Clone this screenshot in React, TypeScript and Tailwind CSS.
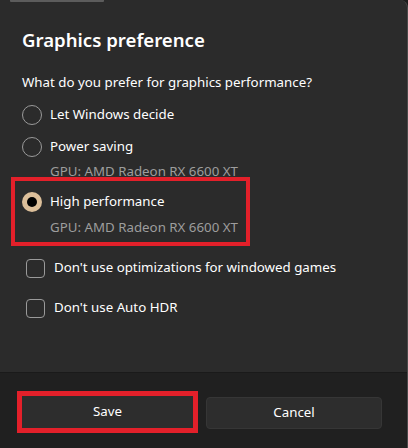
const options = [
  { label: "Let Windows decide", gpu: "" },
  { label: "Power saving", gpu: "GPU: AMD Radeon RX 6600 XT" },
];

function Radio({ checked }: { checked?: boolean }) {
  if (checked) {
    return (
      <span className="flex h-5 w-5 shrink-0 items-center justify-center rounded-full bg-[#dcbf9a]">
        <span className="h-[10px] w-[10px] rounded-full bg-black" />
      </span>
    );
  }
  return <span className="h-5 w-5 shrink-0 rounded-full border border-[#9a9a9a]" />;
}

function Check({ label }: { label: string }) {
  return (
    <div className="flex h-5 items-center gap-[9px] pl-[4px]">
      <span className="h-[19px] w-[19px] shrink-0 rounded-[4px] border border-[#9a9a9a]" />
      <span className="whitespace-nowrap">{label}</span>
    </div>
  );
}

export default function App() {
  return (
    <div
      className="h-[448px] w-[408px] overflow-hidden bg-[#1c1c1c] text-[13.3px] text-white"
      style={{ fontFamily: "'Noto Sans', sans-serif" }}
    >
      <div className="flex h-full flex-col rounded-tr-[8px] border-r border-[#4a4a4a] bg-[#2b2b2b]">
        <div className="ml-[10px] h-[2px] w-[94px] rounded-b-[1px] bg-[#5c5c5c]" />
        <div className="flex-1 px-[22px]">
          <h1 className="mt-[25px] text-[18.6px] font-semibold leading-[26px]">Graphics preference</h1>
          <p className="mt-[19px] leading-[20px]">What do you prefer for graphics performance?</p>

          <div className="mt-[13px] flex flex-col gap-[12px]">
            {options.map((r) => (
              <div key={r.label}>
                <div className="flex h-5 items-center gap-[8px]">
                  <Radio />
                  <span>{r.label}</span>
                </div>
                {r.gpu && (
                  <div className="mt-[5px] whitespace-nowrap pl-[28px] leading-[18px] text-[#9d9d9d]">{r.gpu}</div>
                )}
              </div>
            ))}
          </div>

          <div className="-ml-[11px] -mt-[3px] w-[239px] border-4 border-[#e3202a] px-[7px] pb-[6px] pt-[11px]">
            <div className="flex h-5 items-center gap-[8px]">
              <Radio checked />
              <span>High performance</span>
            </div>
            <div className="mt-[6px] whitespace-nowrap pl-[28px] leading-[18px] text-[#9d9d9d]">
              GPU: AMD Radeon RX 6600 XT
            </div>
          </div>

          <div className="mt-[12px] flex flex-col gap-[20px]">
            <Check label="Don't use optimizations for windowed games" />
            <Check label="Don't use Auto HDR" />
          </div>
        </div>
        <div className="flex h-[76px] items-center gap-[8px] border-t border-[#1a1a1a] bg-[#202020] pl-[17px] pr-[25px] pt-[3px]">
          <div className="flex h-[42px] w-[181px] items-center justify-center border-[5px] border-[#e3202a] bg-[#2d2d2d]">
            Save
          </div>
          <div className="mt-[2px] flex h-[32px] flex-1 items-center justify-center rounded-[4px] border border-[#363636] bg-[#2d2d2d]">
            Cancel
          </div>
        </div>
      </div>
    </div>
  );
}
